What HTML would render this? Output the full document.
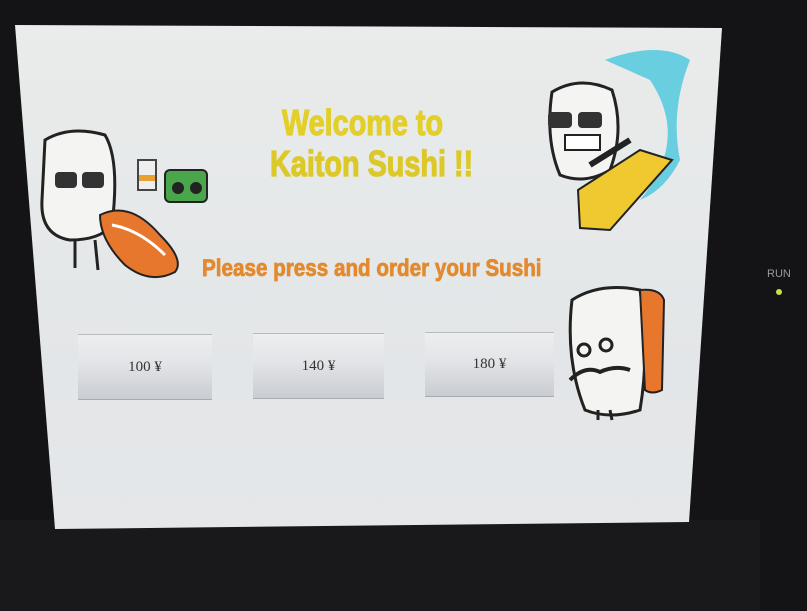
<!DOCTYPE html>
<html><head><meta charset="utf-8"><style>
html,body{margin:0;padding:0}
body{width:807px;height:611px;overflow:hidden;background:#141416;position:relative;font-family:"Liberation Sans",sans-serif}
.bz{position:absolute;left:0;top:520px;width:760px;height:91px;background:#19191b}
.scr{position:absolute;left:0;top:0;width:807px;height:611px;background:linear-gradient(180deg,#eaeceb 0%,#e3e6e8 60%,#e6e8ea 100%);clip-path:polygon(15px 25px,722px 28px,689px 522px,55px 529px)}
.t{position:absolute;font-weight:bold;white-space:nowrap;transform-origin:0 0}
.btn{position:absolute;background:linear-gradient(180deg,#eceef0 0%,#e2e4e7 45%,#c9ccd1 100%);border-top:1px solid #b8bcc2;border-bottom:1px solid #a8acb2;font-family:"Liberation Serif",serif;font-size:15px;color:#333;display:flex;align-items:center;justify-content:center}
</style></head><body>
<div class="bz"></div>
<div class="scr"></div>
<div class="t" style="left:282px;top:102px;font-size:36px;color:#e2cf2a;-webkit-text-stroke:1.2px #e2cf2a;transform:scaleX(0.8)">Welcome to</div>
<div class="t" style="left:270px;top:143px;font-size:36px;color:#dcc928;-webkit-text-stroke:1.2px #dcc928;transform:scaleX(0.8)">Kaiton Sushi !!</div>
<div class="t" style="left:202px;top:255px;font-size:24px;color:#e38a2e;-webkit-text-stroke:0.8px #e38a2e;transform:scaleX(0.86)">Please press and order your Sushi</div>
<div class="btn" style="left:78px;top:334px;width:134px;height:64px">100 ¥</div>
<div class="btn" style="left:253px;top:333px;width:131px;height:64px">140 ¥</div>
<div class="btn" style="left:425px;top:332px;width:129px;height:63px">180 ¥</div>
<svg width="807" height="611" style="position:absolute;left:0;top:0">
<path d="M45 140 Q70 125 105 135 Q120 160 112 225 Q100 240 70 240 Q40 235 42 200 Z" fill="#f4f4f2" stroke="#222" stroke-width="3"/>
<rect x="55" y="172" width="22" height="16" rx="4" fill="#333"/><rect x="82" y="172" width="22" height="16" rx="4" fill="#333"/>
<path d="M100 215 Q130 200 160 235 Q185 260 175 272 Q150 285 125 265 Q100 240 100 215Z" fill="#e8772e" stroke="#222" stroke-width="2"/>
<path d="M112 225 Q140 230 165 255" stroke="#fff" stroke-width="3" fill="none"/>
<path d="M75 240 L75 268 M95 240 L98 270" stroke="#222" stroke-width="3"/>
<rect x="138" y="160" width="18" height="30" fill="#eee" stroke="#444" stroke-width="2"/><rect x="139" y="175" width="16" height="6" fill="#e8a030"/>
<rect x="165" y="170" width="42" height="32" rx="5" fill="#4aa64a" stroke="#222" stroke-width="2"/><circle cx="178" cy="188" r="6" fill="#222"/><circle cx="196" cy="188" r="6" fill="#222"/>
<path d="M605 60 Q660 40 690 60 Q670 110 680 160 Q665 190 640 200 Q690 140 650 80Z" fill="#5ccbe0" opacity="0.9"/>
<path d="M552 92 Q580 75 612 90 Q625 130 610 170 Q585 185 560 175 Q545 140 552 92Z" fill="#f4f4f2" stroke="#222" stroke-width="3"/>
<rect x="548" y="112" width="24" height="16" rx="4" fill="#333"/><rect x="578" y="112" width="24" height="16" rx="4" fill="#333"/>
<rect x="565" y="135" width="35" height="15" fill="#fff" stroke="#222" stroke-width="2"/>
<path d="M578 190 L640 150 L672 160 L610 230 L580 228Z" fill="#f0c830" stroke="#222" stroke-width="2"/>
<path d="M590 165 L630 140" stroke="#222" stroke-width="6"/>
<path d="M572 300 Q600 282 640 290 Q650 350 640 410 Q610 420 585 410 Q565 360 572 300Z" fill="#f4f4f2" stroke="#222" stroke-width="3"/>
<path d="M640 290 Q660 288 664 300 L662 390 Q652 395 645 390Z" fill="#e8772e" stroke="#222" stroke-width="2"/>
<circle cx="584" cy="350" r="6" fill="none" stroke="#222" stroke-width="3"/><circle cx="606" cy="345" r="6" fill="none" stroke="#222" stroke-width="3"/>
<path d="M570 380 Q585 365 600 372 Q615 365 630 370" stroke="#222" stroke-width="4" fill="none"/>
<path d="M598 410 L598 420 M610 410 L612 420" stroke="#222" stroke-width="3"/>
<circle cx="779" cy="292" r="3" fill="#c8e048"/>
</svg>
<div style="position:absolute;left:767px;top:268px;font-size:11px;color:#9a9a9a">RUN</div>
</body></html>
